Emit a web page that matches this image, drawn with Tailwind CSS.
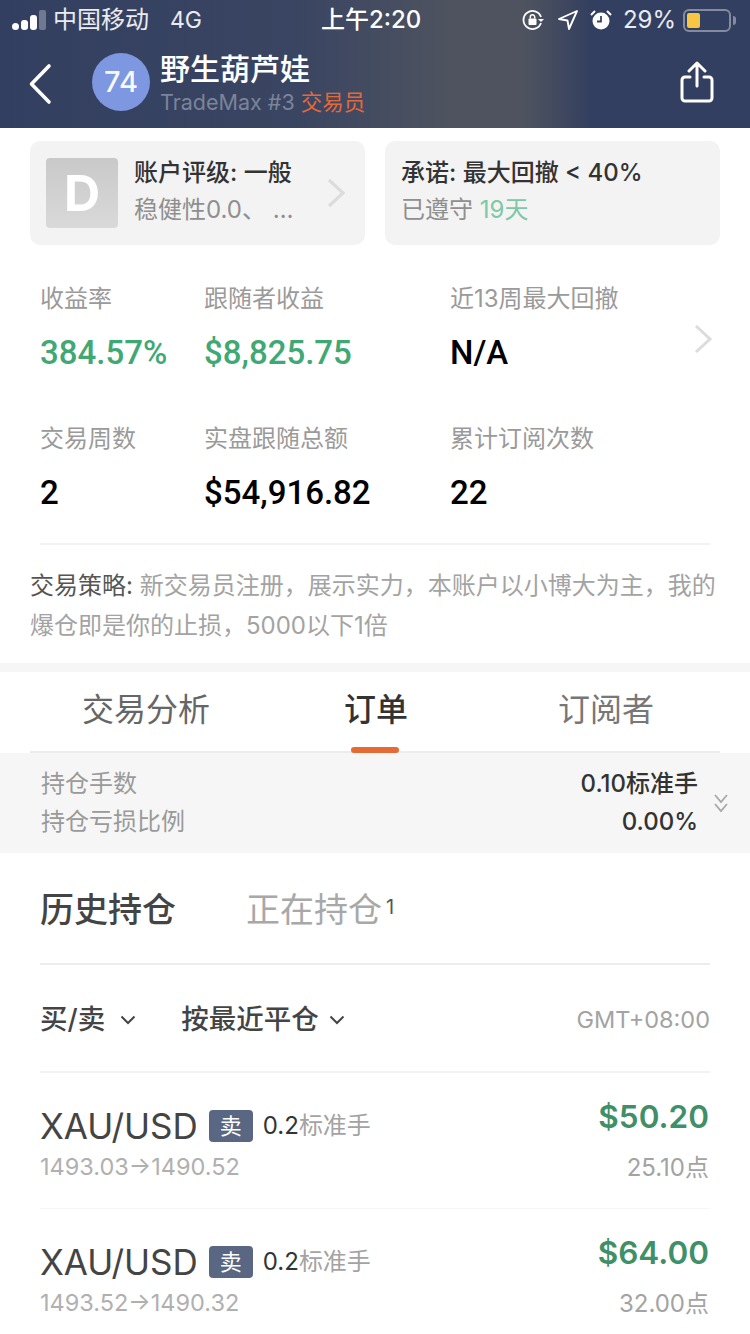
<!DOCTYPE html>
<html lang="zh-CN">
<head>
<meta charset="utf-8">
<script src="https://cdn.jsdelivr.net/npm/@tailwindcss/browser@4"></script>
</head>
<body class="m-0 bg-white">
<div class="w-[750px] h-[1334px] overflow-hidden bg-white font-['Inter','Noto_Sans_CJK_SC',sans-serif] text-[#333]">

  <header class="h-[128px] bg-[linear-gradient(90deg,#333f60_0%,#3a4562_40%,#4e535f_60%,#4e535f_70%,#333f60_79%,#333f60_100%)] text-white">
    <div class="h-[40px] flex items-center pl-[12px] pr-[14px] text-[24px] leading-[40px]">
      <div class="w-[354px] flex items-center">
        <div class="flex items-end gap-[2px] w-[41px] h-[20px]">
          <span class="w-[7px] h-[7px] rounded-full bg-white"></span>
          <span class="w-[7px] h-[10px] rounded-[3px] bg-white"></span>
          <span class="w-[7px] h-[15px] rounded-[3px] bg-white"></span>
          <span class="w-[7px] h-[20px] rounded-[2px] bg-white/30"></span>
        </div>
        <span class="text-white/90">中国移动</span>
        <span class="ml-[21px] text-[23px] text-white/90">4G</span>
      </div>
      <div class="w-[120px] text-[24px] whitespace-nowrap -ml-[39px] font-medium">上午2:20</div>
      <div class="flex items-center ml-[82px]">
        <svg class="w-[24px] h-[24px]" viewBox="0 0 24 24" fill="none" stroke="white" stroke-width="1.8"><path d="M20 15a9 9 0 1 1 0-6"/><path d="M23 11l-3 3-3-3" fill="white" stroke="none"/><rect x="7.5" y="10.5" width="8" height="6.5" rx="1" fill="white" stroke="none"/><path d="M9.3 10.5V9a2.2 2.2 0 0 1 4.4 0v1.5" stroke-width="1.5"/></svg>
        <svg class="w-[22px] h-[22px] ml-[12px]" viewBox="0 0 22 22" fill="none" stroke="white" stroke-width="1.9" stroke-linejoin="round"><path d="M20 2L2 10l8.5 1.5L12 20z"/></svg>
        <svg class="w-[22px] h-[22px] ml-[11px]" viewBox="0 0 22 22"><circle cx="11" cy="12" r="8.5" fill="white"/><path d="M11 7v5.5H7" fill="none" stroke="#3a4562" stroke-width="1.8"/><path d="M1 6l4-4M21 6l-4-4" stroke="white" stroke-width="2"/></svg>
        <span class="ml-[11px] text-white/90">29%</span>
        <div class="ml-[7px] w-[48px] h-[23px] border-2 border-white/40 rounded-[6px] p-[2px] flex">
          <div class="w-[13px] bg-[#f7c744] rounded-[2px]"></div>
        </div>
        <span class="ml-[2px] w-[3px] h-[9px] bg-white/40 rounded-r-full"></span>
      </div>
    </div>

    <div class="h-[88px] flex items-center relative">
      <svg class="ml-[28px] w-[24px] h-[42px]" viewBox="0 0 24 42" fill="none" stroke="white" stroke-width="3.6" stroke-linecap="round" stroke-linejoin="round"><path d="M21 3L3.5 21 21 39"/></svg>
      <div class="ml-[40px] -mt-[4px] w-[58px] h-[58px] rounded-full bg-[#7d97e0] flex items-center justify-center text-[29px] font-medium text-white/95">74</div>
      <div class="ml-[10px] flex flex-col -mt-[5px]">
        <div class="text-[30px] leading-[40px] font-medium">野生葫芦娃</div>
        <div class="text-[21.5px] leading-[26px] text-[#7b8499] whitespace-nowrap">TradeMax #3 <span class="text-[#e4693a]">交易员</span></div>
      </div>
      <svg class="ml-auto mr-[36px] w-[34px] h-[42px] -mt-[4px]" viewBox="0 0 34 42" fill="none" stroke="white" stroke-width="3" stroke-linecap="round" stroke-linejoin="round"><path d="M10 16H5a3 3 0 0 0-3 3v18a3 3 0 0 0 3 3h24a3 3 0 0 0 3-3V19a3 3 0 0 0-3-3h-5"/><path d="M17 25V3M9 10l8-8 8 8"/></svg>
    </div>
  </header>

  <section class="flex gap-[20px] px-[30px] pt-[13px]">
    <div class="w-[335px] h-[104px] rounded-[10px] bg-[#f3f3f3] flex items-center pl-[16px]">
      <div class="w-[72px] h-[70px] rounded-[4px] bg-[linear-gradient(180deg,#c9c9c9,#d9d9d9)] flex items-center justify-center text-[50px] font-bold text-white">D</div>
      <div class="ml-[16px] w-[190px]">
        <div class="text-[24px] leading-[34px] font-medium text-[#333] whitespace-nowrap">账户评级: 一般</div>
        <div class="text-[24px] leading-[40px] text-[#8f8f8f] whitespace-nowrap">稳健性0.0、 …</div>
      </div>
      <svg class="ml-[2px] w-[20px] h-[32px]" viewBox="0 0 20 32" fill="none" stroke="#dcdcdc" stroke-width="3.2"><path d="M3 3l14 13L3 29"/></svg>
    </div>
    <div class="w-[335px] h-[104px] rounded-[10px] bg-[#f3f3f3] flex flex-col justify-center pl-[16px]">
      <div class="text-[24px] leading-[34px] font-medium text-[#333] whitespace-nowrap">承诺: 最大回撤 &lt; 40%</div>
      <div class="text-[24px] leading-[40px] text-[#8f8f8f] whitespace-nowrap">已遵守 <span class="text-[#7fc7a8]">19天</span></div>
    </div>
  </section>

  <section class="relative mx-[40px] h-[300px] border-b-2 border-[#f2f2f2] pt-[37px]">
    <div class="grid grid-cols-[164px_246px_1fr] grid-rows-[140px_auto]">
      <div>
        <div class="text-[24px] leading-[34px] text-[#9a9a9a]">收益率</div>
        <div class="mt-[15px] text-[33px] leading-[44px] font-medium text-[#3fa874] font-['Roboto','Noto_Sans_CJK_SC',sans-serif] whitespace-nowrap">384.57%</div>
      </div>
      <div>
        <div class="text-[24px] leading-[34px] text-[#9a9a9a]">跟随者收益</div>
        <div class="mt-[15px] text-[33px] leading-[44px] font-medium text-[#3fa874] font-['Roboto','Noto_Sans_CJK_SC',sans-serif] whitespace-nowrap">$8,825.75</div>
      </div>
      <div>
        <div class="text-[24px] leading-[34px] text-[#9a9a9a]">近13周最大回撤</div>
        <div class="mt-[15px] text-[33px] leading-[44px] font-medium text-black font-['Roboto','Noto_Sans_CJK_SC',sans-serif]">N/A</div>
      </div>
      <div>
        <div class="text-[24px] leading-[34px] text-[#9a9a9a]">交易周数</div>
        <div class="mt-[15px] text-[33px] leading-[44px] font-medium text-black font-['Roboto','Noto_Sans_CJK_SC',sans-serif]">2</div>
      </div>
      <div>
        <div class="text-[24px] leading-[34px] text-[#9a9a9a]">实盘跟随总额</div>
        <div class="mt-[15px] text-[33px] leading-[44px] font-medium text-black font-['Roboto','Noto_Sans_CJK_SC',sans-serif] whitespace-nowrap">$54,916.82</div>
      </div>
      <div>
        <div class="text-[24px] leading-[34px] text-[#9a9a9a]">累计订阅次数</div>
        <div class="mt-[15px] text-[33px] leading-[44px] font-medium text-black font-['Roboto','Noto_Sans_CJK_SC',sans-serif]">22</div>
      </div>
    </div>
    <svg class="absolute right-[-3px] top-[78px] w-[20px] h-[32px]" viewBox="0 0 20 32" fill="none" stroke="#dcdcdc" stroke-width="3"><path d="M3 3l14 13L3 29"/></svg>
  </section>

  <p class="mx-[30px] mt-[21px] text-[24px] leading-[40px] text-[#a3a3a3] w-[690px]"><span class="text-[#555]">交易策略:</span> 新交易员注册，展示实力，本账户以小博大为主，我的爆仓即是你的止损，5000以下1倍</p>

  <div class="h-[9px] mt-[17px] bg-[#f6f6f6]"></div>

  <nav class="relative mx-[30px] h-[81px] border-b-2 border-[#ececec] text-[32px]">
    <span class="absolute left-[52px] top-[16px] leading-[44px] text-[#666]">交易分析</span>
    <span class="absolute left-[314px] top-[16px] leading-[44px] font-medium text-[#333]">订单</span>
    <span class="absolute left-[528px] top-[16px] leading-[44px] text-[#777]">订阅者</span>
    <span class="absolute left-[321px] bottom-[-2px] w-[48px] h-[6px] rounded-[3px] bg-[#e66a34]"></span>
  </nav>

  <section class="h-[100px] bg-[#f6f6f6] flex items-center pl-[41px] pr-[21px] text-[24px] leading-[38px]">
    <div class="text-[#9a9a9a]">
      <div>持仓手数</div>
      <div>持仓亏损比例</div>
    </div>
    <div class="ml-auto text-right font-medium text-[#333]">
      <div>0.10标准手</div>
      <div>0.00%</div>
    </div>
    <svg class="ml-[15px] w-[16px] h-[20px]" viewBox="0 0 16 20" fill="none" stroke="#a8a8a8" stroke-width="1.8"><path d="M2 2l6 7 6-7M2 11l6 7 6-7"/></svg>
  </section>

  <section class="mx-[40px]">
    <div class="h-[112px] flex items-center border-b-2 border-[#ececec] pt-[2px]">
      <span class="text-[34px] font-medium text-[#444]">历史持仓</span>
      <span class="ml-[70px] text-[34px] text-[#a8a8a8]">正在持仓</span>
      <span class="ml-[4px] text-[20px] text-[#555] -mt-[4px]">1</span>
    </div>
    <div class="h-[108px] flex items-center border-b-2 border-[#f2f2f2] pt-[3px] text-[27.5px] font-medium text-[#444]">
      <span>买/卖</span>
      <svg class="ml-[15px] w-[16px] h-[10px]" viewBox="0 0 16 10" fill="none" stroke="#444" stroke-width="2"><path d="M1.5 1.5L8 8l6.5-6.5"/></svg>
      <span class="ml-[45px]">按最近平仓</span>
      <svg class="ml-[10px] w-[16px] h-[10px]" viewBox="0 0 16 10" fill="none" stroke="#444" stroke-width="2"><path d="M1.5 1.5L8 8l6.5-6.5"/></svg>
      <span class="ml-auto text-[23.5px] font-normal text-[#a3a3a3]">GMT+08:00</span>
    </div>

    <div class="h-[136px] flex border-b border-[#f6f6f6] pt-[25px]">
      <div>
        <div class="flex items-center h-[56px]">
          <span class="text-[35px] text-[#444]">XAU/USD</span>
          <span class="ml-[11px] w-[44px] h-[32px] rounded-[4px] bg-[#5a6782] text-white text-[22px] flex items-center justify-center">卖</span>
          <span class="ml-[10px] text-[24px] text-[#333]">0.2<span class="text-[#a3a3a3]">标准手</span></span>
        </div>
        <div class="text-[23.5px] leading-[26px] text-[#b0b0b0]">1493.03→1490.52</div>
      </div>
      <div class="ml-auto mr-[1px] text-right">
        <div class="-mt-[3px] text-[31.5px] leading-[44px] font-semibold text-[#3f9068]">$50.20</div>
        <div class="mt-[12px] text-[24px] leading-[34px] text-[#a3a3a3]">25.10点</div>
      </div>
    </div>

    <div class="h-[136px] flex pt-[25px]">
      <div>
        <div class="flex items-center h-[56px]">
          <span class="text-[35px] text-[#444]">XAU/USD</span>
          <span class="ml-[11px] w-[44px] h-[32px] rounded-[4px] bg-[#5a6782] text-white text-[22px] flex items-center justify-center">卖</span>
          <span class="ml-[10px] text-[24px] text-[#333]">0.2<span class="text-[#a3a3a3]">标准手</span></span>
        </div>
        <div class="text-[23.5px] leading-[26px] text-[#b0b0b0]">1493.52→1490.32</div>
      </div>
      <div class="ml-auto mr-[1px] text-right">
        <div class="-mt-[3px] text-[31.5px] leading-[44px] font-semibold text-[#3f9068]">$64.00</div>
        <div class="mt-[12px] text-[24px] leading-[34px] text-[#a3a3a3]">32.00点</div>
      </div>
    </div>
  </section>
</div>
</body>
</html>
